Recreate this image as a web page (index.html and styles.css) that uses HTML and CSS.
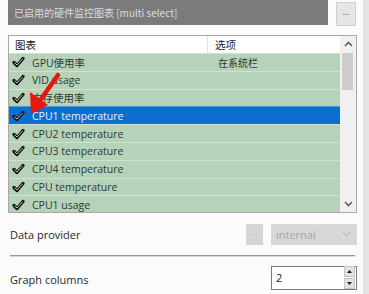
FILE: index.html
```html
<!DOCTYPE html>
<html>
<head>
<meta charset="utf-8">
<link rel="stylesheet" href="styles.css">
</head>
<body>
<div class="page">
  <div class="main">
    <div class="top">
      <div class="titlebar">已启用的硬件监控图表 [multi select]</div>
      <div class="dots-btn">...</div>
    </div>
    <div class="listbox">
      <div class="list">
        <div class="head">
          <div class="col1">图表</div>
          <div class="col2">选项</div>
        </div>
        <div class="row"><span class="chk"></span><span class="name">GPU使用率</span><span class="opt">在系统栏</span></div>
        <div class="row"><span class="chk"></span><span class="name">VID usage</span><span class="opt"></span></div>
        <div class="row"><span class="chk"></span><span class="name">内存使用率</span><span class="opt"></span></div>
        <div class="row sel"><span class="chk"></span><span class="name">CPU1 temperature</span><span class="opt"></span></div>
        <div class="row"><span class="chk"></span><span class="name">CPU2 temperature</span><span class="opt"></span></div>
        <div class="row"><span class="chk"></span><span class="name">CPU3 temperature</span><span class="opt"></span></div>
        <div class="row"><span class="chk"></span><span class="name">CPU4 temperature</span><span class="opt"></span></div>
        <div class="row"><span class="chk"></span><span class="name">CPU temperature</span><span class="opt"></span></div>
        <div class="row"><span class="chk"></span><span class="name">CPU1 usage</span><span class="opt"></span></div>
      </div>
      <div class="vscroll">
        <div class="sb-btn"><svg width="9" height="6" viewBox="0 0 9 6"><path d="M1 5 L4.5 1.5 L8 5" fill="none" stroke="#606060" stroke-width="1.6"/></svg></div>
        <div class="track"><div class="thumb"></div></div>
        <div class="sb-btn"><svg width="9" height="6" viewBox="0 0 9 6"><path d="M1 1 L4.5 4.5 L8 1" fill="none" stroke="#606060" stroke-width="1.6"/></svg></div>
      </div>
      <svg class="arrow" width="70" height="90" viewBox="0 0 70 90">
        <path d="M49 39 L32 63" stroke="#e8160f" stroke-width="4.5" stroke-linecap="round"/>
        <polygon points="22,78 21,56 39,69" fill="#e8160f"/>
      </svg>
    </div>
    <div class="field">
      <div class="label">Data provider</div>
      <div class="controls">
        <div class="small-btn">...</div>
        <div class="combo"><span>internal</span><svg width="9" height="6" viewBox="0 0 9 6"><path d="M1 1 L4.5 4.5 L8 1" fill="none" stroke="#b0b0b0" stroke-width="1"/></svg></div>
      </div>
    </div>
    <div class="sep"></div>
    <div class="field field2">
      <div class="label">Graph columns</div>
      <div class="spin">
        <div class="spin-val">2</div>
        <div class="spin-btns">
          <div class="sbtn"><svg width="5" height="3" viewBox="0 0 5 3"><path d="M0 3 L2.5 0 L5 3Z" fill="#222"/></svg></div>
          <div class="sbtn"><svg width="5" height="3" viewBox="0 0 5 3"><path d="M0 0 L2.5 3 L5 0Z" fill="#222"/></svg></div>
        </div>
      </div>
    </div>
  </div>
  <div class="edge"></div>
</div>
</body>
</html>
```
FILE: styles.css
```css
html, body {
  margin: 0;
  padding: 0;
  background: #fbfbfb;
}
body {
  width: 369px;
  height: 294px;
  overflow: hidden;
  font-family: "Open Sans", "Noto Sans CJK SC", sans-serif;
  font-size: 11px;
  color: #2a2a2a;
}
.page {
  display: flex;
  height: 294px;
  overflow: hidden;
}
.main {
  width: 349px;
  padding-left: 8px;
  display: flex;
  flex-direction: column;
  overflow: hidden;
}
.main > * {
  flex: none;
}
.edge {
  margin-left: auto;
  width: 6px;
  background: #e4e4e4;
}
.top {
  display: flex;
  align-items: flex-start;
  gap: 8px;
  height: 35px;
}
.titlebar {
  width: 314px;
  height: 25px;
  background: #7b7b7b;
  color: #dcdcdc;
  padding-left: 6px;
  line-height: 25px;
  font-family: "Noto Sans CJK SC", sans-serif;
  font-size: 10px;
}
.dots-btn {
  margin-top: 2px;
  width: 18px;
  height: 22px;
  border: 1px solid #cfcfcf;
  background: #e6e6e6;
  font-size: 9px;
  color: #555;
  text-align: center;
  line-height: 18px;
}
.listbox {
  position: relative;
  width: 347px;
  height: 176px;
  border: 1px solid #a8a8a8;
  display: flex;
  background: #fff;
  overflow: hidden;
}
.list {
  flex: 1;
  display: flex;
  flex-direction: column;
}
.head {
  display: flex;
  flex: none;
  height: 17px;
  line-height: 18px;
  background: #fff;
  font-family: "Noto Sans CJK SC", sans-serif;
  font-size: 10.5px;
  color: #222;
}
.col1 {
  width: 192px;
  padding-left: 6px;
  border-right: 1px solid #e2e2e2;
}
.col2 {
  padding-left: 7px;
}
.row {
  display: flex;
  flex: none;
  align-items: center;
  height: 17.8px;
  background: #b6d3ba;
  border-top: 1px solid #cde2cf;
  box-sizing: border-box;
  color: #2f3a30;
}
.row.sel {
  background: #0b6fd2;
  border-top-color: #4c9be0;
  color: #e6f0ff;
}
.chk {
  width: 13px;
  height: 12px;
  margin-left: 3px;
  margin-right: 7px;
  background: no-repeat center / contain;
  background-image: url("data:image/svg+xml;utf8,<svg xmlns='http://www.w3.org/2000/svg' viewBox='0 0 13 12'><path d='M2 6.5 L5 9.5 L11 2.5' fill='none' stroke='%23111' stroke-width='3.2' stroke-linejoin='round' stroke-linecap='round'/><path d='M2.4 6.6 L5 9 L10.6 2.8' fill='none' stroke='%23f2f2f2' stroke-width='0.8'/></svg>");
}
.name {
  width: 186px;
  font-size: 10.5px;
  font-family: "Open Sans", "Noto Sans CJK SC", sans-serif;
}
.opt {
  font-family: "Noto Sans CJK SC", sans-serif;
  font-size: 10px;
}
.vscroll {
  width: 16px;
  flex: none;
  display: flex;
  flex-direction: column;
  background: #f0f0f0;
}
.sb-btn {
  height: 16px;
  flex: none;
  display: flex;
  align-items: center;
  justify-content: center;
  background: #f0f0f0;
}
.track {
  flex: 1;
  padding: 1px 3px 0 2px;
}
.thumb {
  height: 37px;
  background: #cdcdcd;
}
.arrow {
  position: absolute;
  left: 0;
  top: 0;
}
.field {
  display: flex;
  align-items: center;
  justify-content: space-between;
  height: 42px;
  padding-left: 2px;
}
.label {
  font-size: 11px;
  color: #2a2a2a;
}
.controls {
  display: flex;
  align-items: center;
  gap: 8px;
}
.small-btn {
  width: 17px;
  height: 21px;
  background: #d6d6d6;
  color: #a8a8a8;
  font-size: 8px;
  text-align: center;
  line-height: 16px;
}
.combo {
  width: 86px;
  height: 21px;
  background: #d8d8d8;
  box-sizing: border-box;
  padding: 0 6px 0 5px;
  display: flex;
  align-items: center;
  justify-content: space-between;
  color: #a4a4a4;
  font-size: 11px;
}
.sep {
  margin-left: 2px;
  margin-right: 2px;
  height: 1px;
  background: #9c9c9c;
  border-bottom: 1px solid #d8d8d8;
}
.field2 {
  height: 41px;
}
.field2 .label {
  padding-top: 3px;
}
.spin {
  width: 86px;
  height: 24px;
  display: flex;
  align-items: center;
  box-sizing: border-box;
  border: 1px solid #7a7a7a;
  background: #fff;
}
.spin-val {
  flex: 1;
  padding-left: 4px;
  font-size: 11px;
  color: #222;
}
.spin-btns {
  width: 11px;
  margin-right: 1px;
  display: flex;
  flex-direction: column;
  gap: 1px;
}
.sbtn {
  height: 9px;
  background: #e2e2e2;
  border: 1px solid #c4c4c4;
  display: flex;
  align-items: center;
  justify-content: center;
}
```
